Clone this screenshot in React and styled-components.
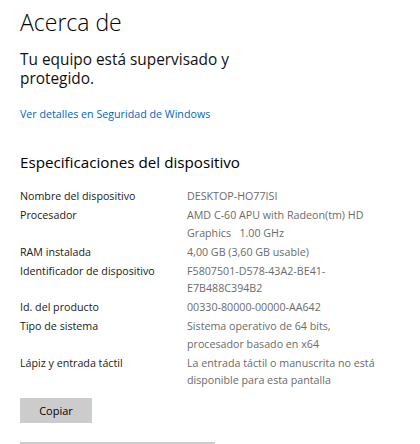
import React from 'react'
import styled, { createGlobalStyle } from 'styled-components'

const GlobalStyle = createGlobalStyle`
  html, body {
    margin: 0;
    padding: 0;
    background: #ffffff;
  }
  body {
    font-family: 'Open Sans', 'Noto Sans', sans-serif;
    color: #000000;
    overflow: hidden;
  }
`

const Page = styled.div`
  width: 420px;
  height: 444px;
  overflow: hidden;
  padding: 6px 20px 0;
  box-sizing: border-box;
`

const Title = styled.h1`
  margin: 0;
  font-size: 23px;
  font-weight: 300;
  line-height: 32px;
  color: #000;
`

const Subtitle = styled.h2`
  margin: 12px 0 0;
  font-size: 15.4px;
  font-weight: 400;
  line-height: 19px;
  width: 215px;
  color: #111;
`

const Link = styled.a`
  display: block;
  margin-top: 18px;
  font-size: 10.7px;
  line-height: 16px;
  color: #0067c0;
  text-decoration: none;
`

const SectionTitle = styled.h3`
  margin: 29px 0 0;
  font-size: 15.2px;
  font-weight: 400;
  line-height: 22px;
  color: #000;
`

const Specs = styled.dl`
  margin: 15px 0 0;
  display: grid;
  grid-template-columns: 167px 1fr;
  row-gap: 1.5px;
  font-size: 10.7px;
  line-height: 17.5px;
`

const Label = styled.dt`
  margin: 0;
  color: #1a1a1a;
`

const Value = styled.dd`
  margin: 0;
  color: #6b6b6b;
  width: 191px;
`

const Button = styled.button`
  display: block;
  margin-top: ${({ $gap }) => $gap}px;
  width: ${({ $width }) => $width}px;
  height: 25px;
  border: none;
  padding: 0;
  background: #cccccc;
  font-family: inherit;
  font-size: 11px;
  color: #000;
`

const specs = [
  ['Nombre del dispositivo', 'DESKTOP-HO77ISI'],
  ['Procesador', 'AMD C-60 APU with Radeon(tm) HD Graphics\u00a0\u00a0\u00a01.00 GHz'],
  ['RAM instalada', '4,00 GB (3,60 GB usable)'],
  ['Identificador de dispositivo', 'F5807501-D578-43A2-BE41-E7B488C394B2'],
  ['Id. del producto', '00330-80000-00000-AA642'],
  ['Tipo de sistema', 'Sistema operativo de 64 bits, procesador basado en x64'],
  ['Lápiz y entrada táctil', 'La entrada táctil o manuscrita no está disponible para esta pantalla'],
]

export default function App() {
  return (
    <>
      <GlobalStyle />
      <Page>
        <Title>Acerca de</Title>
        <Subtitle>Tu equipo está supervisado y protegido.</Subtitle>
        <Link href="#">Ver detalles en Seguridad de Windows</Link>
        <SectionTitle>Especificaciones del dispositivo</SectionTitle>
        <Specs>
          {specs.map(([label, value]) => (
            <React.Fragment key={label}>
              <Label>{label}</Label>
              <Value>{value}</Value>
            </React.Fragment>
          ))}
        </Specs>
        <Button $width={72} $gap={8}>Copiar</Button>
        <Button $width={195} $gap={19} aria-label="Cambiar el nombre de este equipo" />
      </Page>
    </>
  )
}
